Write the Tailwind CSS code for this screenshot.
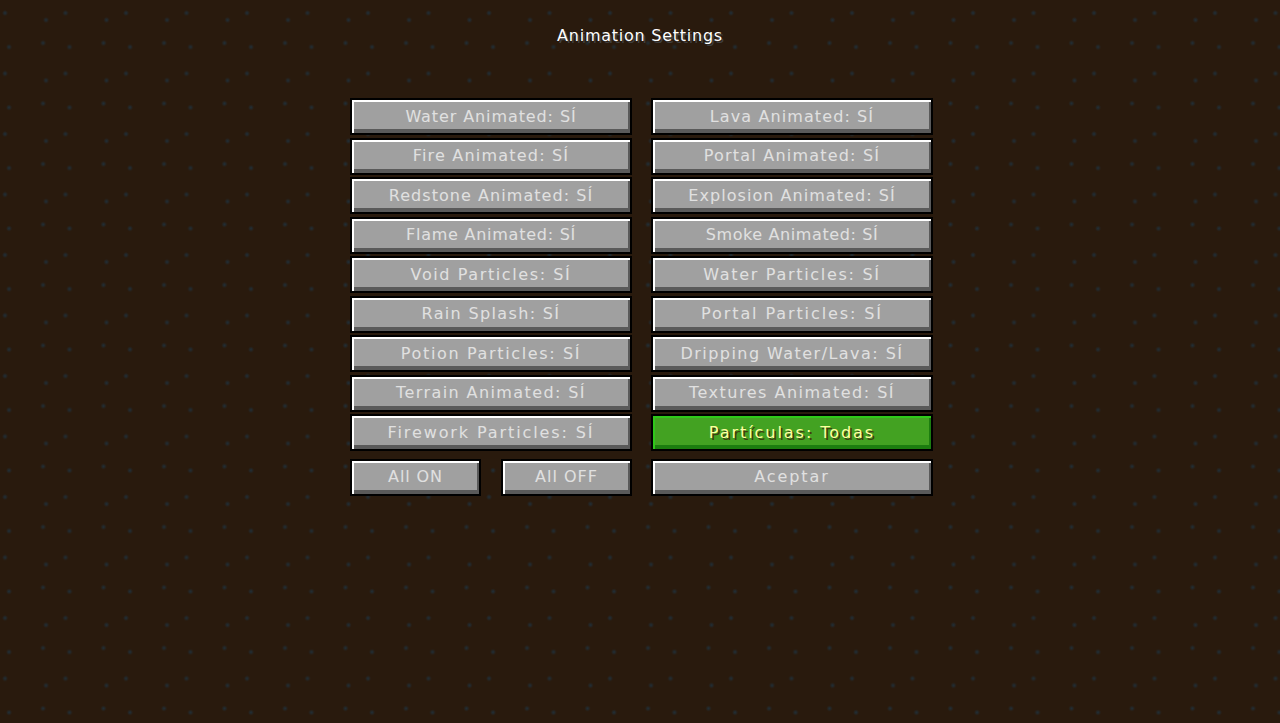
<!doctype html>
<html>
<head>
<meta charset="utf-8">
<script src="https://cdn.jsdelivr.net/npm/@tailwindcss/browser@4"></script>
</head>
<body class="m-0 h-[723px] w-[1280px] overflow-hidden bg-[#291a0d] bg-[radial-gradient(circle_at_5px_13px,#20303a_0,transparent_3px),radial-gradient(circle_at_46px_20px,#20303a_0,transparent_3px),radial-gradient(circle_at_9px_47px,#20303a_0,transparent_3px),radial-gradient(circle_at_43px_43px,#20303a_0,transparent_3px)] bg-[size:60.5px_60.5px] font-['DejaVu_Sans',sans-serif] text-[16px]">
  <h1 class="pt-[26px] text-center text-[16px] font-normal leading-[20px] tracking-[0.75px] text-white [text-shadow:2px_2px_0_#3f3f3f]">Animation Settings</h1>
  <main class="ml-[350px] mt-[52px] grid w-[583px] grid-cols-2 gap-x-[19px] gap-y-[2.5px] text-[#e0e0e0] [text-shadow:2px_2px_0_#383838]">
    <button class="h-[37px] border-2 border-black bg-[#a0a0a0] tracking-[0.9px] shadow-[inset_2px_2px_0_#fff,inset_-2px_-4px_0_#5a5a5a]">Water Animated: SÍ</button>
    <button class="h-[37px] border-2 border-black bg-[#a0a0a0] tracking-[1.1px] shadow-[inset_2px_2px_0_#fff,inset_-2px_-4px_0_#5a5a5a]">Lava Animated: SÍ</button>
    <button class="h-[37px] border-2 border-black bg-[#a0a0a0] tracking-[1.2px] shadow-[inset_2px_2px_0_#fff,inset_-2px_-4px_0_#5a5a5a]">Fire Animated: SÍ</button>
    <button class="h-[37px] border-2 border-black bg-[#a0a0a0] tracking-[1.2px] shadow-[inset_2px_2px_0_#fff,inset_-2px_-4px_0_#5a5a5a]">Portal Animated: SÍ</button>
    <button class="h-[37px] border-2 border-black bg-[#a0a0a0] tracking-[1.05px] shadow-[inset_2px_2px_0_#fff,inset_-2px_-4px_0_#5a5a5a]">Redstone Animated: SÍ</button>
    <button class="h-[37px] border-2 border-black bg-[#a0a0a0] tracking-[1.05px] shadow-[inset_2px_2px_0_#fff,inset_-2px_-4px_0_#5a5a5a]">Explosion Animated: SÍ</button>
    <button class="h-[37px] border-2 border-black bg-[#a0a0a0] tracking-[0.75px] shadow-[inset_2px_2px_0_#fff,inset_-2px_-4px_0_#5a5a5a]">Flame Animated: SÍ</button>
    <button class="h-[37px] border-2 border-black bg-[#a0a0a0] tracking-[0.6px] shadow-[inset_2px_2px_0_#fff,inset_-2px_-4px_0_#5a5a5a]">Smoke Animated: SÍ</button>
    <button class="h-[37px] border-2 border-black bg-[#a0a0a0] tracking-[1.6px] shadow-[inset_2px_2px_0_#fff,inset_-2px_-4px_0_#5a5a5a]">Void Particles: SÍ</button>
    <button class="h-[37px] border-2 border-black bg-[#a0a0a0] tracking-[1.7px] shadow-[inset_2px_2px_0_#fff,inset_-2px_-4px_0_#5a5a5a]">Water Particles: SÍ</button>
    <button class="h-[37px] border-2 border-black bg-[#a0a0a0] tracking-[1.35px] shadow-[inset_2px_2px_0_#fff,inset_-2px_-4px_0_#5a5a5a]">Rain Splash: SÍ</button>
    <button class="h-[37px] border-2 border-black bg-[#a0a0a0] tracking-[1.9px] shadow-[inset_2px_2px_0_#fff,inset_-2px_-4px_0_#5a5a5a]">Portal Particles: SÍ</button>
    <button class="h-[37px] border-2 border-black bg-[#a0a0a0] tracking-[1.65px] shadow-[inset_2px_2px_0_#fff,inset_-2px_-4px_0_#5a5a5a]">Potion Particles: SÍ</button>
    <button class="h-[37px] border-2 border-black bg-[#a0a0a0] tracking-[1.45px] shadow-[inset_2px_2px_0_#fff,inset_-2px_-4px_0_#5a5a5a]">Dripping Water/Lava: SÍ</button>
    <button class="h-[37px] border-2 border-black bg-[#a0a0a0] tracking-[1.4px] shadow-[inset_2px_2px_0_#fff,inset_-2px_-4px_0_#5a5a5a]">Terrain Animated: SÍ</button>
    <button class="h-[37px] border-2 border-black bg-[#a0a0a0] tracking-[1.5px] shadow-[inset_2px_2px_0_#fff,inset_-2px_-4px_0_#5a5a5a]">Textures Animated: SÍ</button>
    <button class="h-[37px] border-2 border-black bg-[#a0a0a0] tracking-[1.9px] shadow-[inset_2px_2px_0_#fff,inset_-2px_-4px_0_#5a5a5a]">Firework Particles: SÍ</button>
    <button class="h-[37px] border-2 border-black bg-[#43a222] tracking-[1.95px] text-[#ffffa0] shadow-[inset_2px_2px_0_#2fc91a,inset_-2px_-4px_0_#1c7d0f] [text-shadow:2px_2px_0_#3f3f10]">Partículas: Todas</button>
    <div class="mt-[5px] grid grid-cols-2 gap-x-[20px]">
      <button class="h-[37px] border-2 border-black bg-[#a0a0a0] tracking-[0.9px] shadow-[inset_2px_2px_0_#fff,inset_-2px_-4px_0_#5a5a5a]">All ON</button>
      <button class="h-[37px] border-2 border-black bg-[#a0a0a0] tracking-[1px] shadow-[inset_2px_2px_0_#fff,inset_-2px_-4px_0_#5a5a5a]">All OFF</button>
    </div>
    <button class="mt-[5px] h-[37px] border-2 border-black bg-[#a0a0a0] tracking-[1.9px] shadow-[inset_2px_2px_0_#fff,inset_-2px_-4px_0_#5a5a5a]">Aceptar</button>
  </main>
</body>
</html>
